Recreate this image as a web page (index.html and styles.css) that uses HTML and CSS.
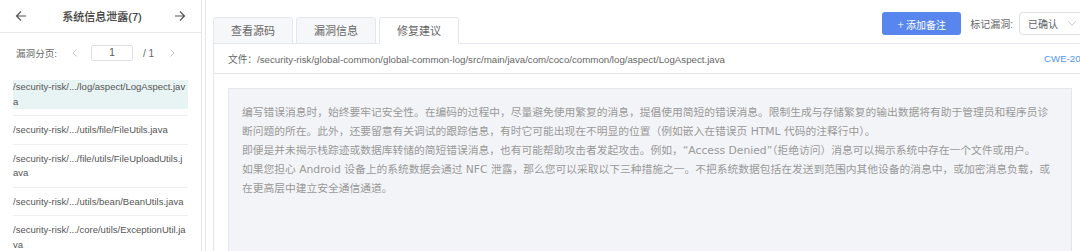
FILE: index.html
```html
<!DOCTYPE html>
<html lang="zh-CN">
<head>
<meta charset="utf-8">
<title>系统信息泄露</title>
<link rel="stylesheet" href="styles.css">
</head>
<body>
<div class="page">
  <aside class="side">
    <div class="side-head">
      <svg class="arrow" width="12" height="12" viewBox="0 0 12 12"><path d="M11 6H1.5M6 1.5L1.5 6L6 10.5" fill="none" stroke="#555" stroke-width="1.2"/></svg>
      <span class="side-title">系统信息泄露(7)</span>
      <svg class="arrow" width="12" height="12" viewBox="0 0 12 12"><path d="M1 6h9.5M6 1.5L10.5 6L6 10.5" fill="none" stroke="#555" stroke-width="1.2"/></svg>
    </div>
    <div class="pager">
      <span class="pager-label">漏洞分页:</span>
      <svg class="pager-btn prev" width="5" height="8" viewBox="0 0 5 8"><path d="M4.5 0.5L1 4L4.5 7.5" fill="none" stroke="#c8cbd0" stroke-width="1"/></svg>
      <span class="pager-input">1</span>
      <span class="pager-total">/ 1</span>
      <svg class="pager-btn next" width="5" height="8" viewBox="0 0 5 8"><path d="M0.5 0.5L4 4L0.5 7.5" fill="none" stroke="#c8cbd0" stroke-width="1"/></svg>
    </div>
    <ul class="file-list">
      <li class="file-item"><div class="file-name active">/security-risk/.../log/aspect/LogAspect.jav<br>a</div></li>
      <li class="file-item"><div class="file-name">/security-risk/.../utils/file/FileUtils.java</div></li>
      <li class="file-item"><div class="file-name">/security-risk/.../file/utils/FileUploadUtils.j<br>ava</div></li>
      <li class="file-item"><div class="file-name">/security-risk/.../utils/bean/BeanUtils.java</div></li>
      <li class="file-item"><div class="file-name">/security-risk/.../core/utils/ExceptionUtil.ja<br>va</div></li>
    </ul>
  </aside>
  <main class="main">
    <div class="main-head">
      <div class="tabs">
        <div class="tab">查看源码</div>
        <div class="tab">漏洞信息</div>
        <div class="tab active">修复建议</div>
      </div>
      <div class="actions">
        <button class="btn-primary"><span class="plus">+</span> 添加备注</button>
        <span class="mark-label">标记漏洞:</span>
        <div class="select">
          <span>已确认</span>
          <svg width="8" height="5" viewBox="0 0 8 5"><path d="M0.5 0.5L4 4.3L7.5 0.5" fill="none" stroke="#c0c4cc" stroke-width="1"/></svg>
        </div>
      </div>
    </div>
    <div class="card">
      <div class="file-bar">
        <span class="file-path">文件：/security-risk/global-common/global-common-log/src/main/java/com/coco/common/log/aspect/LogAspect.java</span>
        <span class="cwe">CWE-200</span>
      </div>
      <div class="advice">
        <p>编写错误消息时，始终要牢记安全性。在编码的过程中，尽量避免使用繁复的消息，提倡使用简短的错误消息。限制生成与存储繁复的输出数据将有助于管理员和程序员诊<br>断问题的所在。此外，还要留意有关调试的跟踪信息，有时它可能出现在不明显的位置（例如嵌入在错误页 HTML 代码的注释行中）。</p>
        <p>即便是并未揭示栈踪迹或数据库转储的简短错误消息，也有可能帮助攻击者发起攻击。例如，“Access Denied”（拒绝访问）消息可以揭示系统中存在一个文件或用户。</p>
        <p>如果您担心 Android 设备上的系统数据会通过 NFC 泄露，那么您可以采取以下三种措施之一。不把系统数据包括在发送到范围内其他设备的消息中，或加密消息负载，或<br>在更高层中建立安全通信通道。</p>
      </div>
    </div>
  </main>
</div>
</body>
</html>
```

FILE: styles.css
```css
* { box-sizing: border-box; }
html, body {
  margin: 0;
  padding: 0;
  background: #fff;
  overflow: hidden;
}
body {
  font-family: "Liberation Sans", "Noto Sans CJK SC", sans-serif;
  color: #555;
}
.page {
  display: flex;
  width: 1100px;
  height: 251px;
  gap: 3px;
}
.side {
  width: 202px;
  flex: none;
  border-right: 1px solid #e6e8eb;
}
.side-head {
  height: 33px;
  border-bottom: 1px solid #e6e8eb;
  display: flex;
  align-items: center;
  justify-content: space-between;
  padding: 0 15px;
}
.arrow { display: block; }
.side-title {
  font-size: 11px;
  color: #333;
  padding-left: 3px;
  -webkit-text-stroke: 0.2px #333;
}
.pager {
  display: flex;
  align-items: center;
  height: 40px;
  padding: 0 0 0 16px;
  font-size: 9.6px;
  color: #666;
}
.pager-label { white-space: nowrap; }
.pager-btn.prev { margin-left: 15px; }
.pager-input {
  margin-left: 14px;
  width: 42px;
  height: 16px;
  border: 1px solid #dcdfe6;
  border-radius: 2px;
  text-align: center;
  line-height: 14px;
  font-size: 10px;
  color: #555;
}
.pager-total { margin-left: 10px; font-size: 10px; color: #666; }
.pager-btn.next { margin-left: 16px; }
.file-list {
  list-style: none;
  margin: 0;
  padding: 0 13px;
}
.file-item {
  padding: 7px 0 6px;
  border-bottom: 1px solid #eceef1;
}
.file-name {
  font-size: 9.5px;
  line-height: 14.5px;
  color: #555;
  white-space: nowrap;
}
.file-name.active { background: #e8f3f3; }
.main {
  flex: 1;
  border-left: 1px solid #e6e8eb;
  padding: 0 13px 0 7px;
}
.main-head {
  height: 43px;
  display: flex;
  justify-content: space-between;
  align-items: flex-start;
}
.tabs {
  display: flex;
  gap: 3px;
  margin-top: 17px;
  position: relative;
  z-index: 1;
}
.tab {
  width: 80px;
  height: 27px;
  border: 1px solid #e4e7ed;
  border-radius: 3px 3px 0 0;
  background: #f6f7f9;
  font-family: "Noto Sans CJK SC", sans-serif;
  font-size: 11px;
  color: #666;
  text-align: center;
  line-height: 25px;
}
.tab.active {
  background: #fff;
  border-bottom-color: #fff;
}
.actions {
  display: flex;
  align-items: center;
  margin-top: 12px;
}
.btn-primary {
  width: 79px;
  height: 23px;
  border: none;
  border-radius: 3px;
  background: #5886ee;
  color: #fff;
  font-family: "Noto Sans CJK SC", sans-serif;
  font-size: 10px;
  padding: 0;
}
.plus { font-size: 12px; font-weight: 300; }
.mark-label {
  margin-left: 9px;
  font-size: 10px;
  color: #666;
}
.select {
  margin-left: 6px;
  width: 68px;
  height: 23px;
  border: 1px solid #dcdfe6;
  border-radius: 4px;
  display: flex;
  align-items: center;
  justify-content: space-between;
  padding: 0 10px 0 8px;
  font-size: 10px;
  color: #606266;
}
.card {
  border: 1px solid #e4e7ed;
  padding: 0 14px;
}
.file-bar {
  height: 30px;
  display: flex;
  align-items: center;
  justify-content: space-between;
  border-bottom: 1px solid #e4e7ed;
  margin: 0 -14px;
  padding: 0 0 0 14px;
  font-size: 9.7px;
}
.file-path { color: #666; }
.cwe { color: #4f96f6; }
.advice {
  margin-top: 14px;
  height: 200px;
  background: #f3f4f7;
  border: 1px solid #e4e7ed;
  padding: 14px 10px 0 13px;
  font-family: "DejaVu Sans", "Noto Sans CJK SC", sans-serif;
  font-size: 10.75px;
  line-height: 19px;
  color: #999;
}
.advice p { margin: 0; }
```
